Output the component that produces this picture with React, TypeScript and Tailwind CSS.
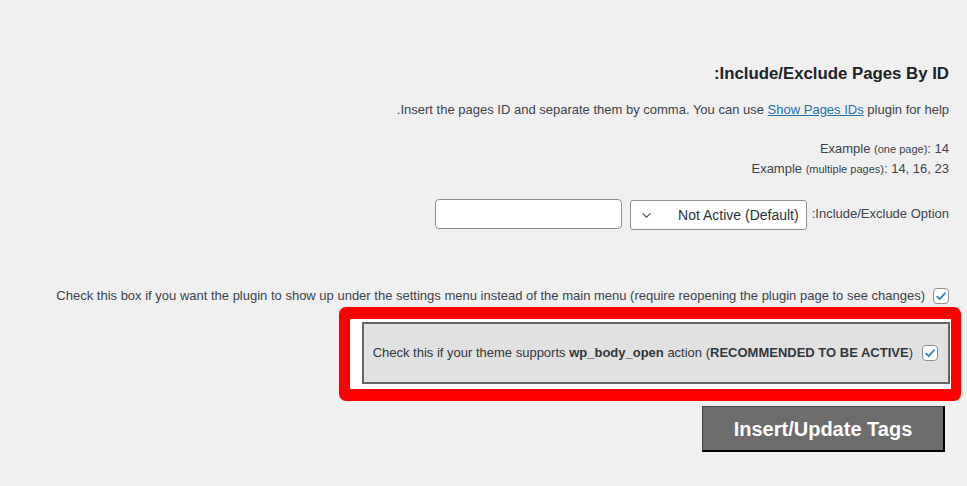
import React from "react";

const Check: React.FC = () => (
  <span className="inline-flex h-4 w-4 shrink-0 items-center justify-center rounded-[4px] border border-[#8c8f94] bg-white">
    <svg viewBox="0 0 16 16" className="h-[15px] w-[15px]">
      <path
        d="M3.6 8.2 L6.6 11.1 L12.6 4.2"
        fill="none"
        stroke="#3582c4"
        strokeWidth="2.1"
        strokeLinecap="round"
        strokeLinejoin="round"
      />
    </svg>
  </span>
);

export default function App() {
  return (
    <div
      dir="rtl"
      className="min-h-[486px] w-full bg-[#f0f0f1] pr-[18px] text-[13px] text-[#3c434a]"
      style={{ fontFamily: '"Liberation Sans", Arial, sans-serif' }}
    >
      <div className="flex flex-col items-start pt-[63px]">
        <h2 className="text-[16.8px] font-bold leading-[22px] text-[#1d2327]">
          Include/Exclude Pages By ID:
        </h2>

        <p className="mt-[15px] leading-[20px]">
          Insert the pages ID and separate them by comma. You can use{" "}
          <a href="#" className="text-[#2271b1] underline">
            Show Pages IDs
          </a>{" "}
          plugin for help.
        </p>

        <div className="mt-[19px] flex flex-col items-start leading-[19px]">
          <span>
            Example <small className="text-[11px]">(one page)</small>: 14
          </span>
          <span>
            Example <small className="text-[11px]">(multiple pages)</small>: 14, 16, 23
          </span>
        </div>

        <div className="mt-[20px] flex items-start">
          <label className="ml-[5px] mt-[7px] leading-[16px]">Include/Exclude Option:</label>
          <div className="mt-[1px] ml-[8px] flex h-[30px] w-[177px] items-center justify-between rounded-[3px] border border-[#8c8f94] bg-white pl-[10px] pr-[7px]">
            <span className="text-[14px] text-[#2c3338]">Not Active (Default)</span>
            <svg viewBox="0 0 12 8" className="h-[7px] w-[11px]">
              <path d="M1.5 1.5 L6 6 L10.5 1.5" fill="none" stroke="#50575e" strokeWidth="1.4" />
            </svg>
          </div>
          <input
            type="text"
            className="h-[30px] w-[187px] rounded-[4px] border border-[#8c8f94] bg-white"
          />
        </div>

        <div className="mt-[56px] flex items-center gap-[8px]">
          <Check />
          <span className="leading-[20px]">
            Check this box if you want the plugin to show up under the settings menu instead of
            the main menu (require reopening the plugin page to see changes)
          </span>
        </div>

        <div className="-mr-[12px] mt-[1px] rounded-[7px] border-b-[12px] border-l-[11px] border-r-[10px] border-t-[12px] border-[#ff0000] bg-white pb-[5px] pl-[12px] pr-[1px] pt-[3px]">
          <div className="flex h-[62px] w-[588px] items-center gap-[9px] border-2 border-[#646464] bg-[#e1e1e1] pr-[10px]">
            <Check />
            <span className="text-[#32373c]">
              Check this if your theme supports <b>wp_body_open</b> action (
              <b>RECOMMENDED TO BE ACTIVE</b>)
            </span>
          </div>
        </div>

        <button className="mr-[4px] mt-[5px] h-[46px] w-[243px] border-b-2 border-l border-r-2 border-t border-b-black border-l-[#444] border-r-black border-t-[#444] bg-[#6c6c6c] text-[20px] font-bold text-white">
          Insert/Update Tags
        </button>
      </div>
    </div>
  );
}
